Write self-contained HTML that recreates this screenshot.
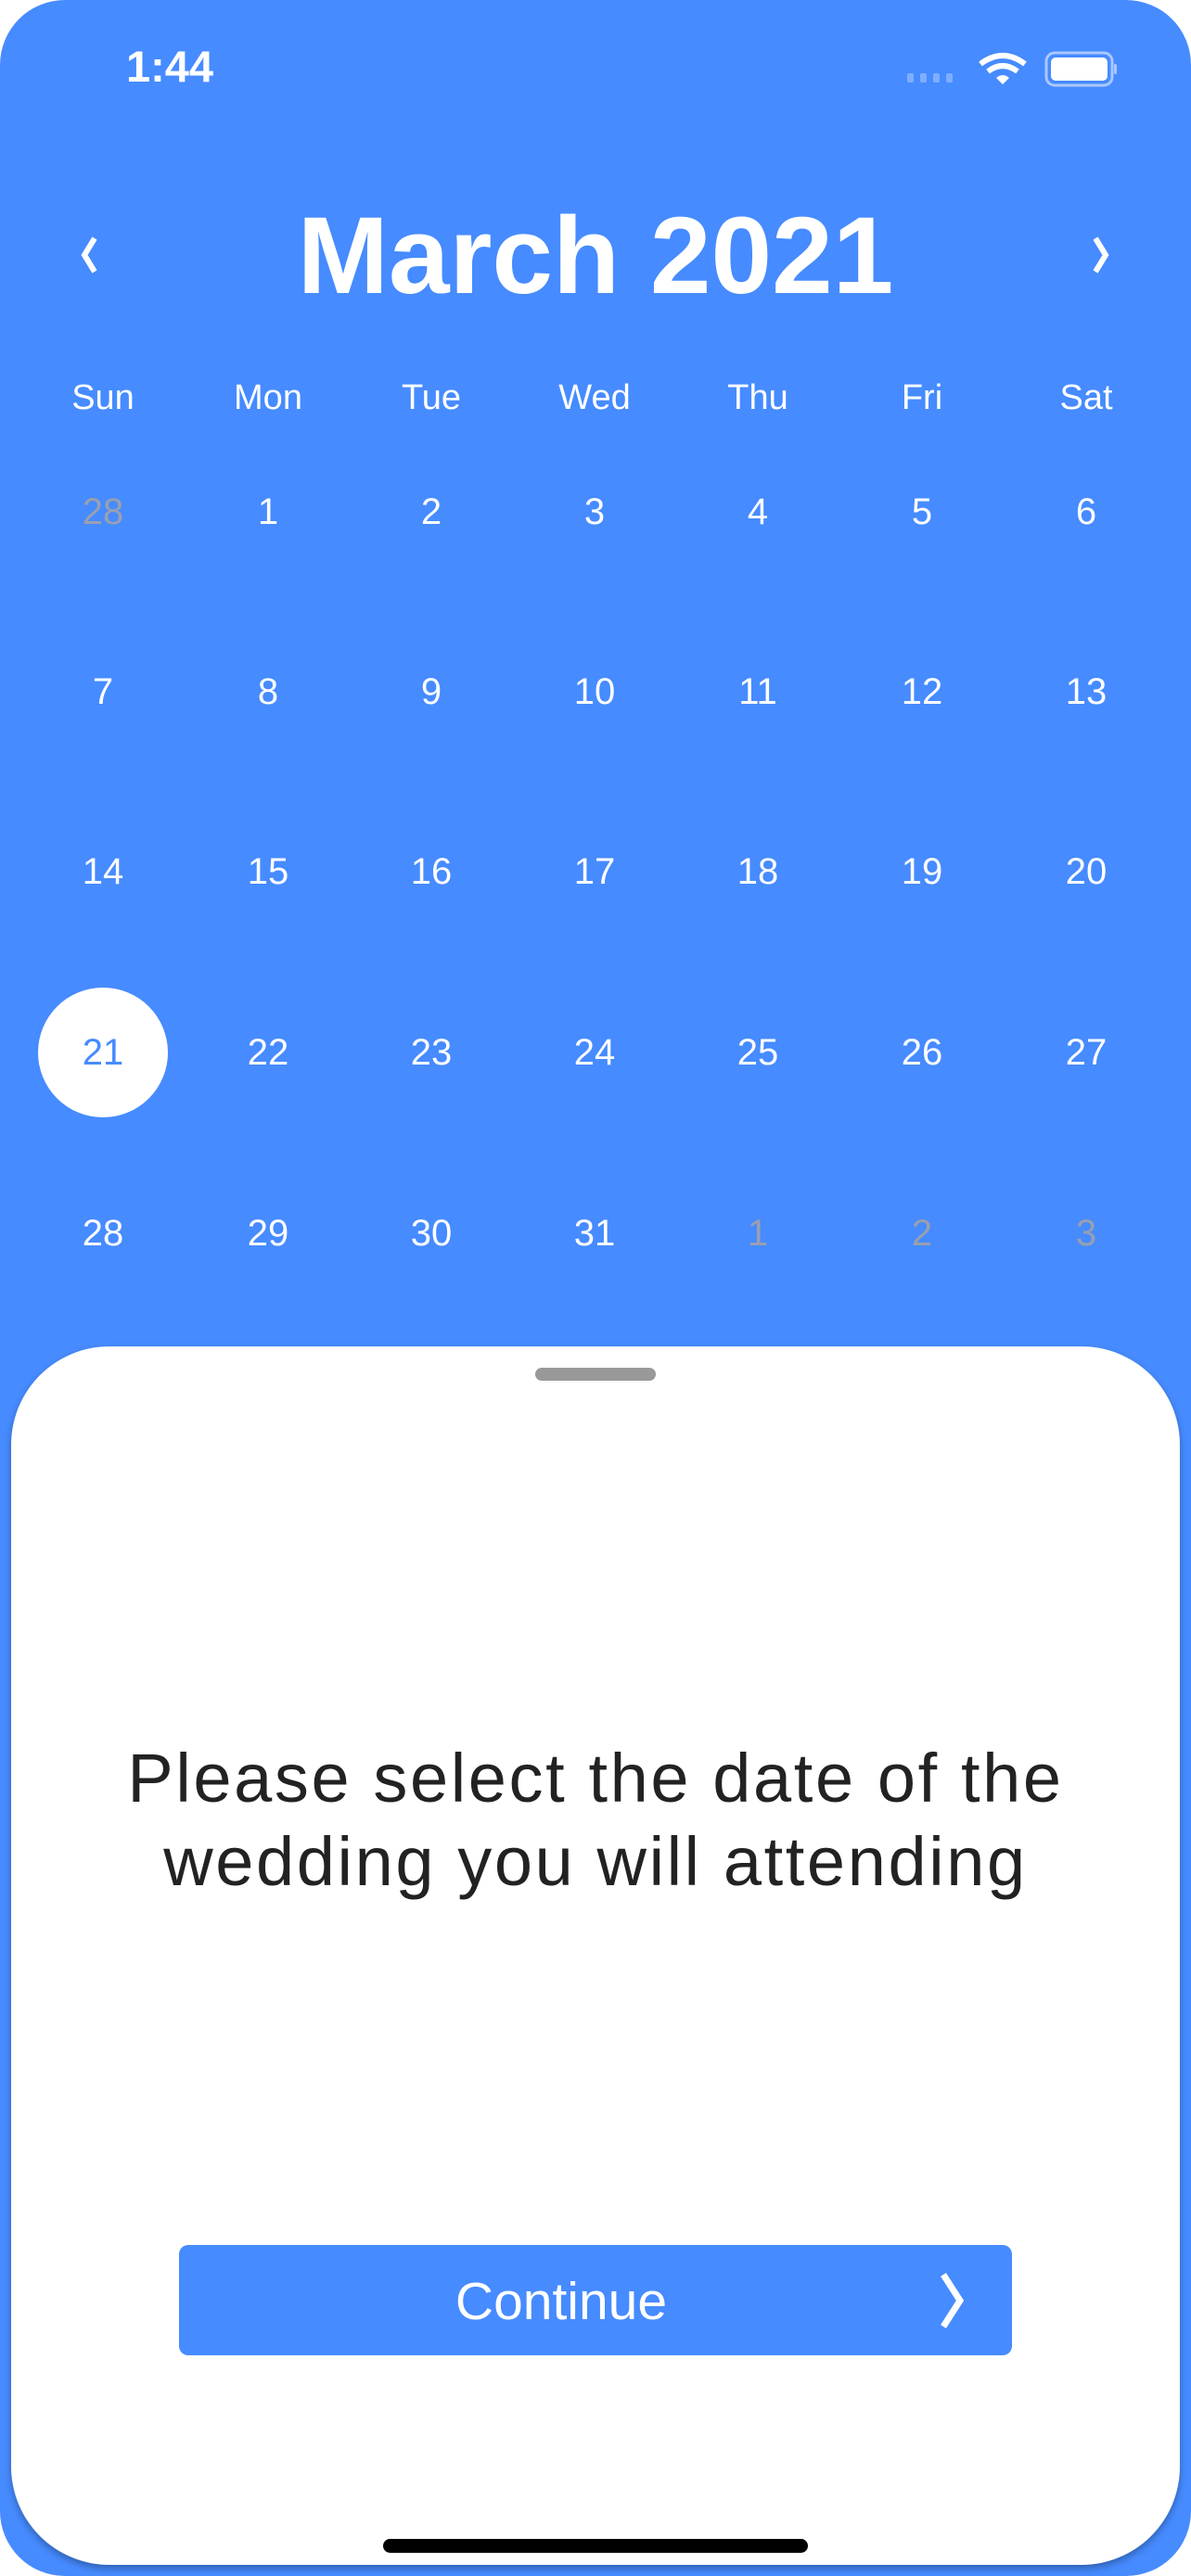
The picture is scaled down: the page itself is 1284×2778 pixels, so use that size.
<!DOCTYPE html>
<html><head><meta charset="utf-8"><style>
*{margin:0;padding:0;box-sizing:border-box}
html,body{width:1284px;height:2778px;background:#fff;overflow:hidden;font-family:"Liberation Sans",sans-serif}
.phone{position:absolute;left:0;top:0;width:1284px;height:2778px;background:#468BFF;border-radius:70px}
.abs{position:absolute}
.time{left:136px;top:44px;color:#fff;font-size:47px;font-weight:bold}
.title{left:0;width:1284px;text-align:center;top:208px;color:#fff;font-size:118px;font-weight:bold}
.wd,.d{position:absolute;width:176px;text-align:center;color:#fff;transform:translateX(-88px)}
.wd{font-size:38px;top:408px}
.d{font-size:40px}
.g{color:#9a9fb0}
.sel{left:41px;top:1065px;width:140px;height:140px;border-radius:50%;background:#fff}
.sheet{left:12px;top:1452px;width:1260px;height:1314px;background:#fff;border-radius:106px;box-shadow:0 4px 8px rgba(0,0,0,.3)}
.handle{left:577px;top:1475px;width:130px;height:14px;border-radius:7px;background:#999}
.msg{left:0;width:1284px;top:1873px;text-align:center;color:#222;font-size:74px;line-height:90px;letter-spacing:2.6px}
.btn{left:193px;top:2421px;width:898px;height:119px;background:#468BFF;border-radius:10px}
.btn span{position:absolute;left:0;width:824px;top:28px;text-align:center;color:#fff;font-size:57px}
.home{left:413px;top:2738px;width:458px;height:15px;border-radius:8px;background:#000}
</style></head><body>
<div class="phone">
<div class="abs time">1:44</div>
<svg class="abs" style="left:975px;top:55px" width="230" height="40" viewBox="0 0 230 40">
<g fill="#7FAEFF"><rect x="3" y="24" width="7" height="10" rx="2"/><rect x="17" y="24" width="7" height="10" rx="2"/><rect x="31" y="24" width="7" height="10" rx="2"/><rect x="45" y="24" width="7" height="10" rx="2"/></g>
<path d="M82 14 Q106 -4 130 14" stroke="#fff" stroke-width="6" fill="none"/>
<path d="M90 22 Q106 10 122 22" stroke="#fff" stroke-width="6" fill="none"/>
<path d="M99 29 L106 36 L113 29 Q106 23 99 29Z" fill="#fff"/>
<rect x="153" y="2" width="71" height="35" rx="9" fill="none" stroke="#A9C8FF" stroke-width="3"/>
<rect x="158" y="7" width="61" height="25" rx="5" fill="#fff"/>
<rect x="226" y="14" width="3" height="11" rx="1.5" fill="#A9C8FF"/>
</svg>
<svg class="abs" style="left:80px;top:253px" width="34" height="44"><path d="M22 4 L11 22 L22 40" stroke="#fff" stroke-width="6" fill="none"/></svg>
<svg class="abs" style="left:1170px;top:253px" width="34" height="44"><path d="M11 4 L22 22 L11 40" stroke="#fff" stroke-width="6" fill="none"/></svg>
<div class="abs title">March 2021</div>
<div class="wd" style="left:111px">Sun</div><div class="wd" style="left:289px">Mon</div><div class="wd" style="left:465px">Tue</div><div class="wd" style="left:641px">Wed</div><div class="wd" style="left:817px">Thu</div><div class="wd" style="left:994px">Fri</div><div class="wd" style="left:1171px">Sat</div>
<div class="abs sel"></div>
<div class="d g" style="left:111px;top:530px">28</div><div class="d" style="left:289px;top:530px">1</div><div class="d" style="left:465px;top:530px">2</div><div class="d" style="left:641px;top:530px">3</div><div class="d" style="left:817px;top:530px">4</div><div class="d" style="left:994px;top:530px">5</div><div class="d" style="left:1171px;top:530px">6</div>
<div class="d" style="left:111px;top:724px">7</div><div class="d" style="left:289px;top:724px">8</div><div class="d" style="left:465px;top:724px">9</div><div class="d" style="left:641px;top:724px">10</div><div class="d" style="left:817px;top:724px">11</div><div class="d" style="left:994px;top:724px">12</div><div class="d" style="left:1171px;top:724px">13</div>
<div class="d" style="left:111px;top:918px">14</div><div class="d" style="left:289px;top:918px">15</div><div class="d" style="left:465px;top:918px">16</div><div class="d" style="left:641px;top:918px">17</div><div class="d" style="left:817px;top:918px">18</div><div class="d" style="left:994px;top:918px">19</div><div class="d" style="left:1171px;top:918px">20</div>
<div class="d" style="left:111px;top:1113px;color:#468BFF">21</div><div class="d" style="left:289px;top:1113px">22</div><div class="d" style="left:465px;top:1113px">23</div><div class="d" style="left:641px;top:1113px">24</div><div class="d" style="left:817px;top:1113px">25</div><div class="d" style="left:994px;top:1113px">26</div><div class="d" style="left:1171px;top:1113px">27</div>
<div class="d" style="left:111px;top:1308px">28</div><div class="d" style="left:289px;top:1308px">29</div><div class="d" style="left:465px;top:1308px">30</div><div class="d" style="left:641px;top:1308px">31</div><div class="d g" style="left:817px;top:1308px">1</div><div class="d g" style="left:994px;top:1308px">2</div><div class="d g" style="left:1171px;top:1308px">3</div>
<div class="abs sheet"></div>
<div class="abs handle"></div>
<div class="abs msg">Please select the date of the<br>wedding you will attending</div>
<div class="abs btn"><span>Continue</span>
<svg class="abs" style="left:816px;top:28px" width="40" height="64"><path d="M8 4 L26 32 L8 60" stroke="#fff" stroke-width="7" fill="none"/></svg></div>
<div class="abs home"></div>
</div>
</body></html>
